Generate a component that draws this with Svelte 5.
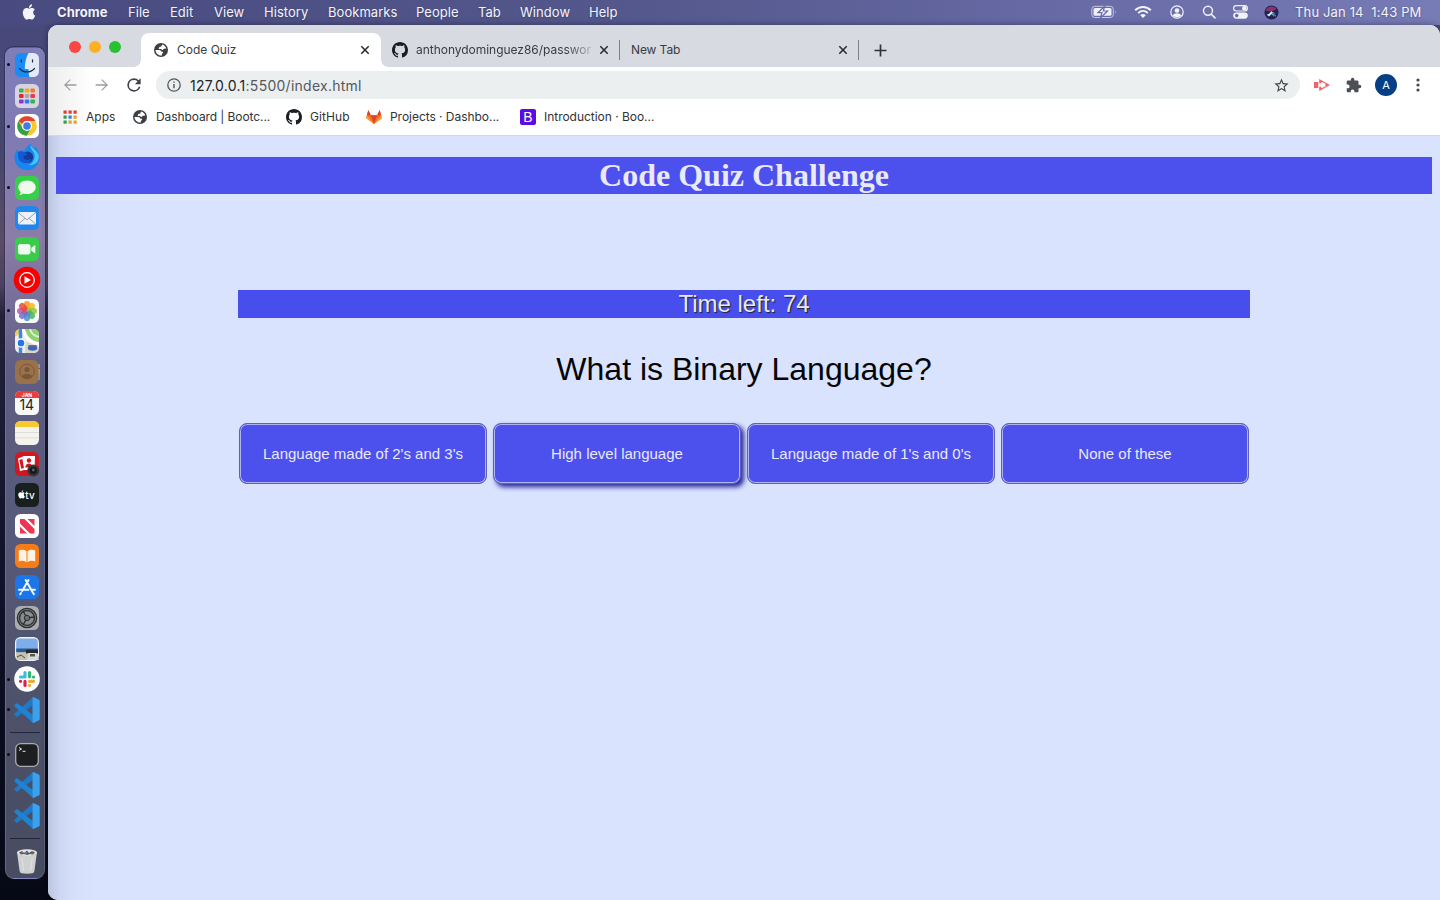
<script>
  const menu = [['Chrome', 71], ['File', 42], ['Edit', 44], ['View', 50], ['History', 64], ['Bookmarks', 88], ['People', 62], ['Tab', 42], ['Window', 69], ['Help', 40]];
  const apps = ['finder', 'launchpad', 'chrome', 'firefox', 'messages', 'mail', 'facetime', 'ytmusic', 'photos', 'maps', 'contacts', 'calendar', 'notes', 'photobooth', 'tv', 'news', 'books', 'appstore', 'settings', 'preview', 'slack', 'vscode'];
  const recent = ['terminal', 'vscode', 'vscode'];
  const running = new Set([0, 2, 4, 8, 20, 21]);
  const answers = ["Language made of 2's and 3's", 'High level language', "Language made of 1's and 0's", 'None of these'];
  const padColors = ['#38b54a', '#f5a623', '#ef7d22', '#e5252f', '#a7a9ac', '#f0384f', '#8f36c9', '#3579e8', '#35b54d'];
  const appColors = ['#e33b2e', '#e33b2e', '#e33b2e', '#2e9e53', '#3b78e7', '#e6a02a', '#2e9e53', '#e6a02a', '#e6a02a'];
  const petals = ['#f39a1e', '#f0b81e', '#9cc23a', '#45b36b', '#4a93c9', '#6d6fd0', '#b059a8', '#e8483e'];
  const octocat = 'M8 0C3.58 0 0 3.58 0 8c0 3.54 2.29 6.53 5.47 7.59.4.07.55-.17.55-.38 0-.19-.01-.82-.01-1.49-2.01.37-2.53-.49-2.69-.94-.09-.23-.48-.94-.82-1.13-.28-.15-.68-.52-.01-.53.63-.01 1.08.58 1.23.82.72 1.21 1.87.87 2.33.66.07-.52.28-.87.51-1.07-1.78-.2-3.64-.89-3.64-3.95 0-.87.31-1.59.82-2.15-.08-.2-.36-1.02.08-2.12 0 0 .67-.21 2.2.82.64-.18 1.32-.27 2-.27s1.36.09 2 .27c1.53-1.04 2.2-.82 2.2-.82.44 1.1.16 1.92.08 2.12.51.56.82 1.27.82 2.15 0 3.07-1.87 3.75-3.65 3.95.29.25.54.73.54 1.48 0 1.07-.01 1.93-.01 2.2 0 .21.15.46.55.38A8.01 8.01 0 0 0 16 8c0-4.42-3.58-8-8-8z';
  const applePath = 'M12.152 6.896c-.948 0-2.415-1.078-3.96-1.04-2.04.027-3.91 1.183-4.961 3.014-2.117 3.675-.546 9.103 1.519 12.09 1.013 1.454 2.208 3.09 3.792 3.039 1.52-.065 2.09-.987 3.935-.987 1.831 0 2.35.987 3.96.948 1.637-.026 2.676-1.48 3.676-2.948 1.156-1.688 1.636-3.325 1.662-3.415-.039-.013-3.182-1.221-3.22-4.857-.026-3.04 2.48-4.494 2.597-4.559-1.429-2.09-3.623-2.324-4.39-2.376-2-.156-3.675 1.09-4.61 1.09zM15.53 3.83c.843-1.012 1.4-2.427 1.245-3.83-1.207.052-2.662.805-3.532 1.818-.78.896-1.454 2.338-1.273 3.714 1.338.104 2.715-.688 3.559-1.701';
</script>

{#snippet globe()}
  <svg width="14" height="14" viewBox="0 0 16 16"><circle cx="8" cy="8" r="8" fill="#3c4043" /><path d="M9.500 1.800c2 .6 3.800 2.200 4.500 4.400l-2.500.5c-.8.2-1 1.200-1.900 1.200-.9 0-1-1.100-2-1.100H6.200c-.8 0-1.100-.6-.7-1.200l.9-1.300h1.500c1.100 0 .5-1.800 1.600-2.500z" fill="#fff" /><path d="M1.700 8h4.500c1 0 1.800.8 1.800 1.700h1.300c.9 0 1.300.9.8 1.600l-1.100 1.200v1.700C5.300 14.800 2 12 1.700 8z" fill="#fff" /></svg>
{/snippet}

{#snippet close()}
  <svg class="x" width="10" height="10" viewBox="0 0 10 10"><path d="M1.300 1.300l7.400 7.400M8.700 1.300l-7.400 7.400" stroke="#26282b" stroke-width="1.500" /></svg>
{/snippet}

{#snippet icon(name)}
  <svg class="app" width="28" height="28" viewBox="0 0 28 28">
    {#if name === 'finder'}
      <rect x="2" y="2" width="24" height="24" rx="5.500" fill="#1c8cf5" /><path d="M15.500 2H20.500a5.500 5.500 0 0 1 5.500 5.500v13a5.500 5.500 0 0 1-5.500 5.500h-4c-.8-2.500-1-5-1-8h-3.700c0-6 1.200-11.500 3.700-16z" fill="#e4eaf5" />
      <path d="M8.300 8.800v2.200M19.500 8.800v2.200M6.500 17.500c4 4.600 11 4.600 15 0" stroke="#1b2b4c" stroke-width="1.200" fill="none" stroke-linecap="round" />
    {:else if name === 'launchpad'}
      <rect x="2" y="2" width="24" height="24" rx="5.500" fill="#d6d4e4" />
      {#each padColors as c, i}<rect x={6 + (i % 3) * 5.700} y={6.400 + Math.floor(i / 3) * 5.500} width="4.600" height="4.200" rx="1" fill={c} />{/each}
    {:else if name === 'chrome'}
      <rect x="2" y="2" width="24" height="24" rx="5.500" fill="#fff" /><circle cx="14" cy="14" r="9.800" fill="#f9c926" />
      <path d="M5.500 9.100A9.800 9.800 0 0 1 22.500 9.100H14a4.900 4.900 0 0 0-4.500 3z" fill="#df4434" /><path d="M5.500 9.100A9.800 9.800 0 0 0 13.600 23.800l4.300-7.400-8.200.3z" fill="#34a04f" />
      <circle cx="14" cy="14" r="5" fill="#fff" /><circle cx="14" cy="14" r="3.800" fill="#3e7de8" />
    {:else if name === 'firefox'}
      <path d="M26.500 14.500a12.500 12.500 0 0 1-25 .3c0-4 1.300-6.500 3-8.600l1 2.200c2-1.300 3.500-.8 5.500-.7 2-2 4.500-6.500 7-7 .3 2.300 2 3.200 3.300 4.600L23 4c1.500 2.500 3.400 6.500 3.500 10.500z" fill="#1786ee" />
      <path d="M17.600 2c-.6 4 2.800 5.800 3.700 8.700 1.500 5-1.400 10-6 11.300 7 1 11-4 10.500-9C25 8 21 7 17.600 2z" fill="#45c8f8" /><circle cx="14.500" cy="14.300" r="5.700" fill="#153b9c" /><path d="M5 9c4.500-2 6.500 1 9.500 2.300-1.500 1.700-3.800 1.200-4 3.500.7 2.200 5 3 7.500 1-.5 5-8 6.300-11.500 1.500C5 15 5 12 5 9z" fill="#1359d3" />
    {:else if name === 'messages'}
      <rect x="2" y="2" width="24" height="24" rx="5.500" fill="#35cf48" /><path d="M14 6.500c5 0 8.700 2.900 8.700 6.700S19 20 14 20c-1.300 0-2.500-.2-3.600-.6-1 .9-2.400 1.500-4 1.500.9-.9 1.300-1.900 1.300-3C6.200 16.700 5.300 15 5.300 13.200 5.300 9.400 9 6.500 14 6.500z" fill="#f0f9ee" />
    {:else if name === 'mail'}
      <rect x="2" y="2" width="24" height="24" rx="5.500" fill="#1f86ee" /><rect x="5" y="8" width="18" height="12.500" rx="1.800" fill="#eef1f5" /><path d="M5.500 8.800l8.500 7 8.500-7M5.700 19.800l6.300-5.500M22.300 19.800l-6.300-5.500" fill="none" stroke="#8c9aaa" stroke-width=".9" />
    {:else if name === 'facetime'}
      <rect x="2" y="2" width="24" height="24" rx="5.500" fill="#38cc49" /><rect x="5" y="9" width="12.500" height="10.500" rx="2.800" fill="#eefbee" /><path d="M18.300 12.800l4-2.800v8.500l-4-2.800z" fill="#eefbee" />
    {:else if name === 'ytmusic'}
      <circle cx="14" cy="14" r="13.300" fill="#f90000" /><circle cx="14" cy="14" r="7.300" fill="none" stroke="#fff" stroke-width="1.200" /><path d="M11.500 10.200L18 14l-6.500 3.800z" fill="#fff" />
    {:else if name === 'photos'}
      <rect x="2" y="2" width="24" height="24" rx="5.500" fill="#fafafa" />
      {#each petals as c, i}<rect x="10.900" y="4" width="6.200" height="9.500" rx="3.100" fill={c} opacity=".85" transform={`rotate(${i * 45} 14 14)`} />{/each}
    {:else if name === 'maps'}
      <clipPath id="map"><rect x="2" y="2" width="24" height="24" rx="5.500" /></clipPath>
      <g clip-path="url(#map)"><rect x="2" y="2" width="24" height="24" fill="#f2efe6" /><path d="M2 2h10L2 10z" fill="#f4cc45" /><path d="M12 2h14v13C18 14 14 9 12 2z" fill="#8ed36b" /><path d="M17 2c1 4 4 7 9 8" stroke="#d8f0ca" stroke-width="2" fill="none" /><path d="M7.500 2v24" stroke="#3c87ec" stroke-width="3.500" /><path d="M10 2c2 10 8 14 16 15" stroke="#fff" stroke-width="2.500" fill="none" /><path d="M12 26V14l14 6v6z" fill="#d8d6ca" /><circle cx="8" cy="16" r="4" fill="#2276e8" stroke="#fff" stroke-width="1.300" /><path d="M15.500 18.500q4 1 8 0l.8 3c-.7 3-8.900 3-9.600 0z" fill="#3c66b8" /><path d="M15.500 18.600h8" stroke="#d6484b" stroke-width="1.400" /></g>
    {:else if name === 'contacts'}
      <path d="M25 6h2v4h-2z" fill="#8c9aa0" /><path d="M25 11h2v4h-2z" fill="#d78e45" /><path d="M25 15h2v3h-2z" fill="#63b56b" /><path d="M25 18h2v4h-2z" fill="#4aa3d8" /><rect x="2" y="2" width="23.500" height="24" rx="5.500" fill="#99714a" /><circle cx="14" cy="13.500" r="7.300" fill="none" stroke="#785331" stroke-width=".9" /><circle cx="14" cy="11.500" r="2.600" fill="#78583a" /><path d="M8.800 18.300c1-3.500 9.400-3.500 10.400 0-2.500 3-7.900 3-10.400 0z" fill="#78583a" />
    {:else if name === 'calendar'}
      <rect x="2" y="2" width="24" height="24" rx="5.500" fill="#f8f8f8" /><path d="M2 9V7.500A5.500 5.500 0 0 1 7.500 2h13A5.500 5.500 0 0 1 26 7.500V9z" fill="#ec3d3a" />
      <text x="14" y="7.600" font-size="5" font-weight="700" text-anchor="middle" fill="#fff">JAN</text><text x="13.800" y="21.300" font-size="14" text-anchor="middle" fill="#222">14</text>
    {:else if name === 'notes'}
      <rect x="2" y="2" width="24" height="24" rx="5.500" fill="#f5f3ed" /><path d="M2 8V7.500A5.500 5.500 0 0 1 7.500 2h13A5.500 5.500 0 0 1 26 7.500V8z" fill="#f8c830" /><path d="M2 13.500h24M2 18.800h24" stroke="#d5d3cd" stroke-width=".7" />
    {:else if name === 'photobooth'}
      <rect x="2" y="2" width="24" height="24" rx="5.500" fill="#cf1822" /><path d="M5 8.500l5-2 3 13-6 1.500z" fill="#fff" /><path d="M6.300 10l3-1 2 9-3 .8z" fill="#cf1822" /><path d="M10 6h12l-.5 14H11z" fill="#fff" /><circle cx="16" cy="10.500" r="2.200" fill="#cf1822" /><path d="M12.300 17.500c0-5.500 7-5.500 7.200 0z" fill="#cf1822" /><circle cx="20.300" cy="20.500" r="6" fill="#353537" /><circle cx="20.300" cy="20.500" r="3.600" fill="#161718" /><circle cx="20.300" cy="20" r="1.400" fill="#665a6d" />
    {:else if name === 'tv'}
      <rect x="2" y="2" width="24" height="24" rx="5.500" fill="#18201f" /><path d={applePath} fill="#fff" transform="translate(4.500 9.300) scale(.34)" /><text x="12.300" y="17.500" font-size="10" font-weight="500" fill="#fff">tv</text>
    {:else if name === 'news'}
      <rect x="2" y="2" width="24" height="24" rx="5.500" fill="#fff" /><path d="M7 7h4.500L21.500 17v4.500H17L7 11.500zM14.500 7h7v7zM7 14.500v7h7z" fill="#ee3552" />
    {:else if name === 'books'}
      <rect x="2" y="2" width="24" height="24" rx="5.500" fill="#f57c18" /><path d="M13.500 9.200C11 7.500 8 7.500 5.800 8.500v11c2.500-1 5-1 7.700.7zM14.500 9.200c2.500-1.700 5.500-1.700 7.700-.7v11c-2.500-1-5-1-7.700.7z" fill="#fff3e2" />
    {:else if name === 'appstore'}
      <rect x="2" y="2" width="24" height="24" rx="5.500" fill="#1c76e8" /><path d="M15.500 7l-6.300 11M12.700 7l6.800 12M6 16.800h9.500M18.500 16.800H22M8 20l-.8 1.200M20.200 20l.7 1.200" stroke="#eef6ff" stroke-width="2" stroke-linecap="round" />
    {:else if name === 'settings'}
      <rect x="2" y="2" width="24" height="24" rx="5.500" fill="#a9adae" /><circle cx="14" cy="14" r="9.600" fill="#8a8d90" stroke="#2d3033" stroke-width="1.400" /><circle cx="14" cy="14" r="7.500" fill="none" stroke="#33363a" stroke-width="1.500" /><path d="M14 14l7-1M14 14l-4-7M14 14l-4 7" stroke="#2d3033" stroke-width="1.400" /><circle cx="14" cy="14" r="2.700" fill="#6d7175" stroke="#2d3033" />
    {:else if name === 'preview'}
      <rect x="2" y="2" width="24" height="24" rx="5.500" fill="#eef2f6" /><path d="M3.200 7a3.500 3.500 0 0 1 3.500-3.500h14.600A3.500 3.500 0 0 1 24.800 7v8H3.200z" fill="#7eaee9" /><path d="M3.200 13.500h21.600v4H3.200z" fill="#285c98" /><path d="M3.200 17.500h21.600V22a3 3 0 0 1-3 3H6a3 3 0 0 1-2.800-3z" fill="#c9c2ad" /><path d="M13 14.500h12v4H13z" fill="#26282c" /><path d="M15 18h8.500l2.500 7H14z" fill="#d7dada" /><path d="M17 19h5v2.500h-5z" fill="#56595c" /><path d="M4 22l4-2 4 3" stroke="#454c4c" fill="none" />
    {:else if name === 'slack'}
      <circle cx="14" cy="14" r="12.800" fill="#fff" /><g stroke-width="3.200" stroke-linecap="round"><path d="M12 7.500v3.700M7.500 12H12" stroke="#39bde8" /><path d="M16.500 7.500v4.200M20.500 12h-.1" stroke="#32b67a" /><path d="M16.500 16.300h4M16.500 20.500v-.1" stroke="#e8ae2c" /><path d="M12 16.300v4.200M7.500 16.300h.1" stroke="#df1f5a" /></g>
    {:else if name === 'vscode'}
      <path d="M19.500 1.400L1.600 17.600q-.8.700 0 1.500l1.500 1.300q.7.500 1.500 0L20 9z" fill="#1f78c8" /><path d="M19.500 26.600L1.600 10.400q-.8-.7 0-1.500l1.500-1.300q.7-.5 1.500 0L20 19z" fill="#1f83d2" /><path d="M19.500 1.400q.7-.5 1.500-.1l4.700 2.300q1 .5 1 1.500v17.800q0 1-1 1.500L21 26.700q-.8.400-1.500-.1z" fill="#38a2ee" />
    {:else if name === 'terminal'}
      <rect x="2.700" y="2.700" width="22.600" height="22.600" rx="5" fill="#1d1e20" stroke="#a9acae" stroke-width="1.300" /><path d="M6 6.500l2.500 1.500L6 9.500M9.500 10.300h3" stroke="#fff" fill="none" stroke-width=".9" />
    {:else if name === 'trash'}
      <path d="M4 5h20l-2.600 19q-.2 2-2 2.300-5.400.8-10.800 0-1.800-.3-2-2.300z" fill="#cfd0d0" /><path d="M9 11l1.500 13M19 11l-1.500 13" stroke="#dcdddd" stroke-width="1.500" /><ellipse cx="14" cy="5.500" rx="10" ry="3.300" fill="#e4e5e5" /><path d="M6 5.500l3-1.500 2 2 3-2.500 2 2.500 3-2 3 1.500-2 2-3-.5-3 1-3-1-3 .5z" fill="#515a57" /><path d="M8 6l2-1M18 7l2-1" stroke="#cd5c5b" stroke-width="1" /><path d="M12 6.500l2-1" stroke="#6ca3cc" />
    {/if}
  </svg>
{/snippet}

<div class="desktop">
  <header class="menubar">
    <svg class="apple" width="14" height="16" viewBox="1 0 22 24"><path d={applePath} fill="#f3f3fa" /></svg>
    <nav>{#each menu as [label, w], i}<span class:bold={i === 0} style:width={`${w}px`}>{label}</span>{/each}</nav>
    <div class="status">
      <svg width="26" height="14" viewBox="0 0 26 14"><rect x=".8" y="1.300" width="21.500" height="11.200" rx="3" fill="none" stroke="#c9c9e0" stroke-width="1" /><rect x="2.500" y="3" width="18" height="7.800" rx="1.500" fill="#f0f0f8" /><path d="M24 5.200v3.500q1.500-1.700 0-3.500z" fill="#c9c9e0" /><path d="M13.800 1L7 7.700h4L9.300 13 16.500 6h-4.200z" fill="#f5f5fb" stroke="#686ba7" stroke-width="1.200" /></svg>
      <svg width="18" height="14" viewBox="0 0 18 14"><g fill="none" stroke="#f3f3fa" stroke-width="2"><path d="M1.200 5.200c4.400-4.400 11.200-4.400 15.600 0" /><path d="M4.200 8.100c2.800-2.700 6.800-2.700 9.600 0" /></g><path d="M6.200 10.200c1.700-1.500 3.900-1.500 5.600 0L9 13z" fill="#f3f3fa" /></svg>
      <svg width="14" height="14" viewBox="0 0 14 14"><circle cx="7" cy="7" r="6.200" fill="none" stroke="#f3f3fa" stroke-width="1.200" /><circle cx="7" cy="5.500" r="2.300" fill="#f3f3fa" /><path d="M2.800 10.500c1.300-3 7.100-3 8.400 0-1.900 2.300-6.500 2.300-8.400 0z" fill="#f3f3fa" /></svg>
      <svg width="14" height="14" viewBox="0 0 14 14"><circle cx="6" cy="5.800" r="4.500" fill="none" stroke="#f3f3fa" stroke-width="1.400" /><path d="M9.300 9.200l3.700 3.700" stroke="#f3f3fa" stroke-width="1.500" stroke-linecap="round" /></svg>
      <svg width="15" height="14" viewBox="0 0 15 14"><rect x=".6" y=".6" width="13.800" height="5.400" rx="2.700" fill="none" stroke="#f3f3fa" stroke-width="1.100" /><circle cx="11.300" cy="3.300" r="2.300" fill="#f3f3fa" /><rect x=".2" y="7.500" width="14.600" height="6.200" rx="3.100" fill="#f3f3fa" /><circle cx="3.700" cy="10.600" r="1.800" fill="#6d71ae" /></svg>
      <svg width="15" height="15" viewBox="0 0 15 15"><circle cx="7.500" cy="7.500" r="7" fill="#25204f" /><path d="M1.500 6a6.300 6.300 0 0 1 11-2L8 6.500z" fill="#88326f" /><path d="M2.500 9.500c2.500 0 3.500-1.500 4.700-3.500.8 1.500 2.500 2 5.300 2.200L8.500 8.300l1.700 3.700L7.700 9 5 11.500z" fill="#c6f4f6" /><path d="M8 8.300l4 3" stroke="#4a7ce2" stroke-width="1.300" /></svg>
    </div>
    <span class="date">Thu Jan 14&nbsp; 1:43 PM</span>
  </header>

  <div class="workspace">
    <aside class="dock">
      {#each apps as name, i}<div class="slot"><i class:dot={running.has(i)}></i>{@render icon(name)}</div>{/each}
      <div class="rule"></div>
      {#each recent as name, i}<div class="slot"><i class:dot={i === 0}></i>{@render icon(name)}</div>{/each}
      <div class="rule"></div>
      <div class="slot"><i></i>{@render icon('trash')}</div>
    </aside>

    <section class="window">
      <div class="tabs">
        <div class="lights"><i class="red"></i><i class="yellow"></i><i class="green"></i></div>
        <div class="tab active">{@render globe()}<span class="t1">Code Quiz</span>{@render close()}</div>
        <div class="tab second"><svg width="16" height="16" viewBox="0 0 16 16"><path d={octocat} fill="#1b1f23" /></svg><span class="fade">anthonydominguez86/passwor</span>{@render close()}</div>
        <div class="tab third"><span class="t3">New Tab</span>{@render close()}</div>
        <svg class="plus" width="13" height="13" viewBox="0 0 13 13"><path d="M6.500.5v12M.5 6.500h12" stroke="#303236" stroke-width="1.700" /></svg>
      </div>
      <div class="toolbar">
        <svg width="18" height="18" viewBox="0 0 24 24"><path d="M20.500 11H7.300l5.600-5.600L12 4.300 4 12l8 7.700.9-1.100L7.300 13h13.200z" fill="#9a9b9d" /></svg>
        <svg width="18" height="18" viewBox="0 0 24 24"><path d="M3.500 11h13.200l-5.600-5.600 1-1.100L20 12l-8 7.700-.9-1.100 5.600-5.600H3.500z" fill="#9a9b9d" /></svg>
        <svg width="20" height="20" viewBox="0 0 24 24"><path d="M17.650 6.350A7.958 7.958 0 0 0 12 4a8 8 0 1 0 7.730 10h-2.080A6 6 0 1 1 12 6c1.660 0 3.140.690 4.220 1.780L13 11h7V4z" fill="#404246" /></svg>
        <div class="address">
          <svg width="14" height="14" viewBox="0 0 14 14"><circle cx="7" cy="7" r="6.200" fill="none" stroke="#54575b" stroke-width="1.300" /><path d="M7 6v4.200M7 3.500v1.300" stroke="#54575b" stroke-width="1.400" /></svg>
          <span><b>127.0.0.1</b>:5500/index.html</span>
          <svg class="star" width="17" height="17" viewBox="0 0 24 24"><path d="M22 9.240l-7.190-.620L12 2 9.190 8.630 2 9.240l5.460 4.730L5.820 21 12 17.270 18.180 21l-1.630-7.030zM12 15.400l-3.760 2.270 1-4.280-3.320-2.880 4.380-.380L12 6.100l1.710 4.040 4.380.380-3.320 2.880 1 4.280z" fill="#44474b" /></svg>
        </div>
        <svg class="ext" width="16" height="14" viewBox="0 0 16 14"><path d="M0 4h4.300v6H0z" fill="#f46067" /><path fill-rule="evenodd" d="M5.200 1L16 7 5.200 13zM5.200 5.200v3.600h2v1h2.200V8.700h2V5.300h-2V4.200H7.200v1z" fill="#f46067" /></svg>
        <svg class="puzzle" width="16" height="16" viewBox="1 0 23 23"><path d="M20.500 11H19V7c0-1.100-.9-2-2-2h-4V3.500a2.500 2.500 0 0 0-5 0V5H4c-1.100 0-1.990.9-1.990 2v3.800H3.500c1.490 0 2.700 1.210 2.700 2.700s-1.210 2.700-2.700 2.700H2V20c0 1.100.9 2 2 2h3.800v-1.500c0-1.490 1.210-2.700 2.700-2.700s2.700 1.210 2.700 2.700V22H17c1.100 0 2-.9 2-2v-4h1.500a2.500 2.500 0 0 0 0-5z" fill="#4c4f53" /></svg>
        <div class="avatar">A</div>
        <svg class="dots" width="4" height="14" viewBox="0 0 4 14"><g fill="#45484c"><circle cx="2" cy="2" r="1.600" /><circle cx="2" cy="7" r="1.600" /><circle cx="2" cy="12" r="1.600" /></g></svg>
      </div>
      <div class="bookmarks">
        <div class="bm" style:width="70px"><svg width="14" height="14" viewBox="0 0 14 14">{#each appColors as c, i}<rect x={.5 + (i % 3) * 5} y={.5 + Math.floor(i / 3) * 5} width="3.200" height="3.200" fill={c} />{/each}</svg><span class="l1">Apps</span></div>
        <div class="bm" style:width="153px">{@render globe()}<span class="l2">Dashboard | Bootc...</span></div>
        <div class="bm" style:width="80px"><svg width="16" height="16" viewBox="0 0 16 16"><path d={octocat} fill="#1b1f23" /></svg><span class="l3">GitHub</span></div>
        <div class="bm" style:width="154px"><svg width="16" height="16" viewBox="0 0 16 16"><path d="M8 15L0 9l2.300-8 2.500 5.200h6.400L13.700 1 16 9z" fill="#fb6d27" /><path d="M4.800 6.200h6.400L8 15z" fill="#e24329" /><path d="M0 9l1-2.500L8 15zM16 9l-1-2.500L8 15z" fill="#fca42c" /><path d="M2.300 1L1 6.200h3.800zM13.700 1L15 6.200h-3.800z" fill="#d9422a" /></svg><span class="l4">Projects · Dashbo...</span></div>
        <div class="bm"><span class="boot">B</span><span class="l5">Introduction · Boo...</span></div>
      </div>
      <main>
        <h1><span>Code Quiz Challenge</span></h1>
        <div class="quiz">
          <div class="timer"><span>Time left: 74</span></div>
          <div class="question"><span>What is Binary Language?</span></div>
          <div class="answers">{#each answers as answer, i}<button class:hovered={i === 1}>{answer}</button>{/each}</div>
        </div>
      </main>
    </section>
  </div>
</div>

<style>
  :global(body) { margin: 0; overflow: hidden; }
  .desktop, .desktop * { box-sizing: border-box; }
  .desktop { width: 1440px; height: 900px; display: flex; flex-direction: column; overflow: hidden; font-family: Inter, sans-serif; background: linear-gradient(180deg, #484a7d 0, #45466f 150px, #5b4b69 240px, #4b4261 285px, #25213b 315px, #1e1d36 400px, #11132b 560px, #090c1d 730px, #060915 900px); }
  svg { display: block; flex: none; }
  .menubar { height: 25px; flex: none; display: flex; align-items: center; padding-bottom: 1px; color: #f3f3fa; font-size: 13px; background: linear-gradient(90deg, #494b80, #54588c 45%, #686ba6 75%, #777bb6); text-shadow: 0 1px 2px #24244a66; }
  .apple { margin: 0 21px 0 22px; }
  nav { display: flex; width: 1034px; letter-spacing: .05px; }
  nav .bold { font-weight: 700; letter-spacing: .05px; }
  .status { display: flex; align-items: center; width: 204px; }
  .status svg:nth-child(1) { margin-right: 17px; }
  .status svg:nth-child(2) { margin-right: 18px; }
  .status svg:nth-child(3) { margin-right: 18px; }
  .status svg:nth-child(4) { margin-right: 17px; }
  .status svg:nth-child(5) { margin-right: 16px; }
  .date { letter-spacing: .15px; white-space: nowrap; }
  .workspace { flex: 1; min-height: 0; display: flex; }
  .dock { width: 40px; height: 832px; margin: 22px 3px 0 5px; padding-top: 1.500px; flex: none; border: 1px solid #9396b755; border-radius: 9px; background: linear-gradient(180deg, #7e7eb9 0, #807ab3 90px, #8a7da7 190px, #77709b 250px, #5f5d83 320px, #575a79 470px, #4b5067 700px, #474c61 832px); box-shadow: 0 0 0 1px #15172c66; }
  .slot { height: 30.720px; display: flex; align-items: center; }
  .slot i { width: 3px; height: 3px; margin: 0 3px 0 1px; border-radius: 50%; }
  .slot .dot { background: #090a16; }
  .rule { height: 13.900px; display: flex; align-items: center; }
  .rule::before { content: ''; width: 30px; height: 1px; margin-left: 4px; background: #22263b; }
  .window { flex: 1; min-width: 0; display: flex; flex-direction: column; overflow: hidden; border-radius: 10px 10px 0 10px; background: #fff; box-shadow: 0 0 6px #0006; }
  .tabs { height: 42px; flex: none; display: flex; background: #d7dae1; font-size: 12px; color: #3a3c40; }
  .lights { width: 93px; padding: 16px 0 0 21px; display: flex; gap: 8px; }
  .lights i { width: 12px; height: 12px; border-radius: 50%; }
  .red { background: #fb4646; } .yellow { background: #fdb024; } .green { background: #28c131; }
  .tab { height: 34px; margin-top: 8px; display: flex; align-items: center; white-space: nowrap; }
  .active { position: relative; width: 240px; padding-left: 13px; border-radius: 8px 8px 0 0; background: #fff; }
  .active::before, .active::after { content: ''; position: absolute; bottom: 0; width: 7px; height: 7px; }
  .active::before { left: -7px; background: radial-gradient(circle at 0 0, transparent 6.500px, #fff 7px); }
  .active::after { right: -7px; background: radial-gradient(circle at 100% 0, transparent 6.500px, #fff 7px); }
  .tab span { position: relative; top: -.5px; }
  .t1 { width: 183px; margin-left: 9px; letter-spacing: 0; }
  .second { width: 238px; padding-left: 11px; }
  .fade { width: 175px; margin: 0 8px 0 8px; letter-spacing: -.03px; -webkit-mask-image: linear-gradient(90deg, #000 150px, transparent 182px); mask-image: linear-gradient(90deg, #000 150px, transparent 182px); }
  .third { width: 240px; height: 20px; margin-top: 15px; padding-left: 11px; border-left: 1px solid #7e8187; border-right: 1px solid #7e8187; }
  .t3 { width: 207px; letter-spacing: -.1px; }
  .plus { margin: 19px 0 0 15px; }
  .toolbar { height: 36px; flex: none; display: flex; align-items: center; padding-left: 13px; background: linear-gradient(90deg, #ededed, #fff 45px); }
  .toolbar > svg:nth-child(-n+2) { margin-right: 14px; }
  .toolbar > svg:nth-child(3) { margin: 0 12px 0 -1px; }
  .address { width: 1144px; height: 28px; padding: 0 10px 0 11px; display: flex; align-items: center; border-radius: 14px; background: #ebeff0; color: #55585c; font-size: 14px; }
  .address span { margin-left: 9px; flex: 1; letter-spacing: .26px; }
  .address b { font-weight: 400; color: #202226; }
  .ext { margin-left: 14px; } .puzzle { margin-left: 16px; }
  .avatar { width: 22px; height: 22px; margin-left: 13px; flex: none; display: flex; align-items: center; justify-content: center; border-radius: 50%; color: #fff; background: #073f86; font-size: 11px; }
  .dots { margin-left: 19px; }
  .bookmarks { height: 33px; flex: none; display: flex; padding: 0 0 5px 15px; border-bottom: 1px solid #d6d8e0; background: linear-gradient(90deg, #ededed, #fff 45px); font-size: 12px; color: #303236; white-space: nowrap; }
  .bm { display: flex; align-items: center; }
  .l1, .l2 { margin-left: 9px; } .l3, .l4, .l5 { margin-left: 8px; }
  .l2 { letter-spacing: -.09px; } .l3 { letter-spacing: .1px; } .l4 { letter-spacing: -.04px; } .l5 { letter-spacing: -.03px; }
  .boot { width: 16px; height: 16px; border-radius: 2px; background: #5b0be5; color: #fff; font: 14px/16px "Liberation Sans", sans-serif; text-align: center; }
  main { flex: 1; padding: 21px 8px 0; background: linear-gradient(90deg, #bdc6df 0, #ced8f2 12px, #d6e0fb 30px, #d9e3fd 50px); text-align: center; }
  h1 { height: 37px; margin: 0; background: #4c50ec; color: #e9e9fa; font: 700 32px/37px "Liberation Serif", serif; }
  .quiz { width: 1012px; margin: 96px auto 0; font-family: "Liberation Sans", sans-serif; }
  .timer { height: 28px; background: #484eed; color: #e9e9fa; font-size: 24px; line-height: 28px; text-shadow: 1px 1px 1px #222; }
  .question { margin: 32px 0 35px; height: 38px; font-size: 32px; line-height: 38px; color: #050507; }
  .answers { display: grid; grid-template-columns: repeat(4, 1fr); gap: 6px; padding: 0 1px; }
  button { height: 61px; padding: 0; border: 1px solid #625fb8; border-radius: 8px; background: #4c50ec; color: #e9e9fa; font: 15px "Liberation Sans", sans-serif; box-shadow: inset 0 0 0 1px #b0b4f0; }
  .hovered { box-shadow: inset 0 0 0 1px #b0b4f0, 3px 3px 5px #24249a; }
</style>
